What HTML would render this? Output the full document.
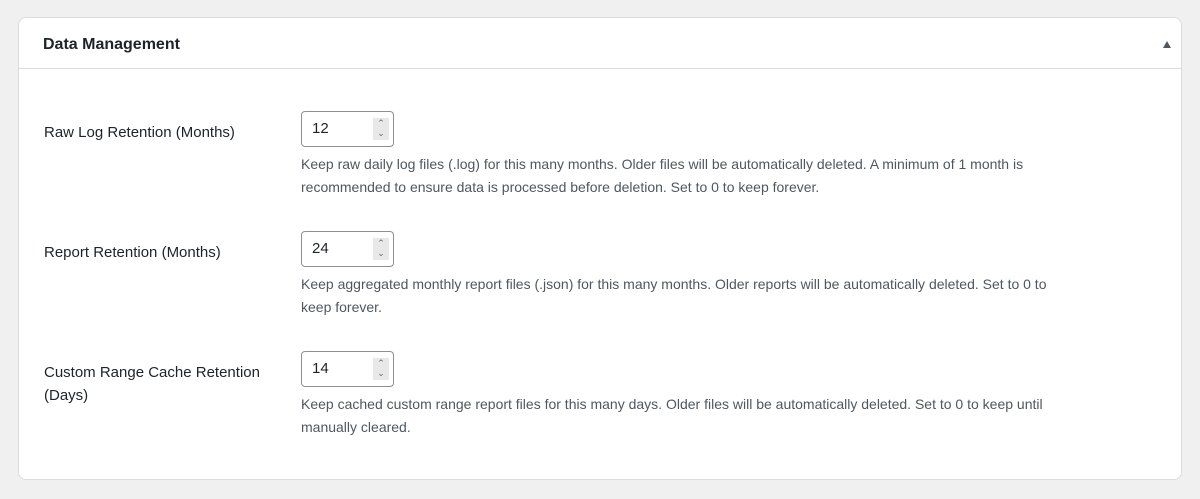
<!DOCTYPE html>
<html><head><style>
body{margin:0;background:#f0f0f1;font-family:"Liberation Sans",sans-serif;width:1200px;height:499px;overflow:hidden}
.box{position:absolute;left:18px;top:17px;width:1162px;height:461px;background:#fff;border:1px solid #dcdcde;border-radius:8px}
.hd{height:50px;border-bottom:1px solid #dcdcde;position:relative}
.hd h2{margin:0;position:absolute;left:24px;top:18px;font-size:16px;font-weight:bold;color:#1d2327}
.tri{position:absolute;right:10px;top:23px;width:0;height:0;border-left:4.5px solid transparent;border-right:4.5px solid transparent;border-bottom:7px solid #50575e}
.row{position:absolute;left:0;width:100%}
.lab{position:absolute;left:25px;top:10px;font-size:15px;color:#1d2327;line-height:23px;width:240px}
.in{position:absolute;left:282px;top:0;width:91px;height:34px;border:1px solid #8c8f94;border-radius:4px}
.in span{position:absolute;left:10px;top:8px;font-size:15px;color:#1d2327}
.sp{position:absolute;right:4px;top:6px;width:16px;height:22px;background:#e8e8e8;color:#666;font-size:9px;text-align:center;line-height:10px}
.desc{position:absolute;left:282px;top:42px;width:775px;font-size:14px;color:#50575e;line-height:23px}
</style></head><body>
<div class="box">
<div class="hd"><h2>Data Management</h2><div class="tri"></div></div>
<div class="row" style="top:93px"><div class="lab">Raw Log Retention (Months)</div><div class="in"><span>12</span><div class="sp">&#8963;<br>&#8964;</div></div><div class="desc">Keep raw daily log files (.log) for this many months. Older files will be automatically deleted. A minimum of 1 month is recommended to ensure data is processed before deletion. Set to 0 to keep forever.</div></div>
<div class="row" style="top:213px"><div class="lab">Report Retention (Months)</div><div class="in"><span>24</span><div class="sp">&#8963;<br>&#8964;</div></div><div class="desc">Keep aggregated monthly report files (.json) for this many months. Older reports will be automatically deleted. Set to 0 to keep forever.</div></div>
<div class="row" style="top:333px"><div class="lab">Custom Range Cache Retention (Days)</div><div class="in"><span>14</span><div class="sp">&#8963;<br>&#8964;</div></div><div class="desc">Keep cached custom range report files for this many days. Older files will be automatically deleted. Set to 0 to keep until manually cleared.</div></div>
</div>
</body></html>
